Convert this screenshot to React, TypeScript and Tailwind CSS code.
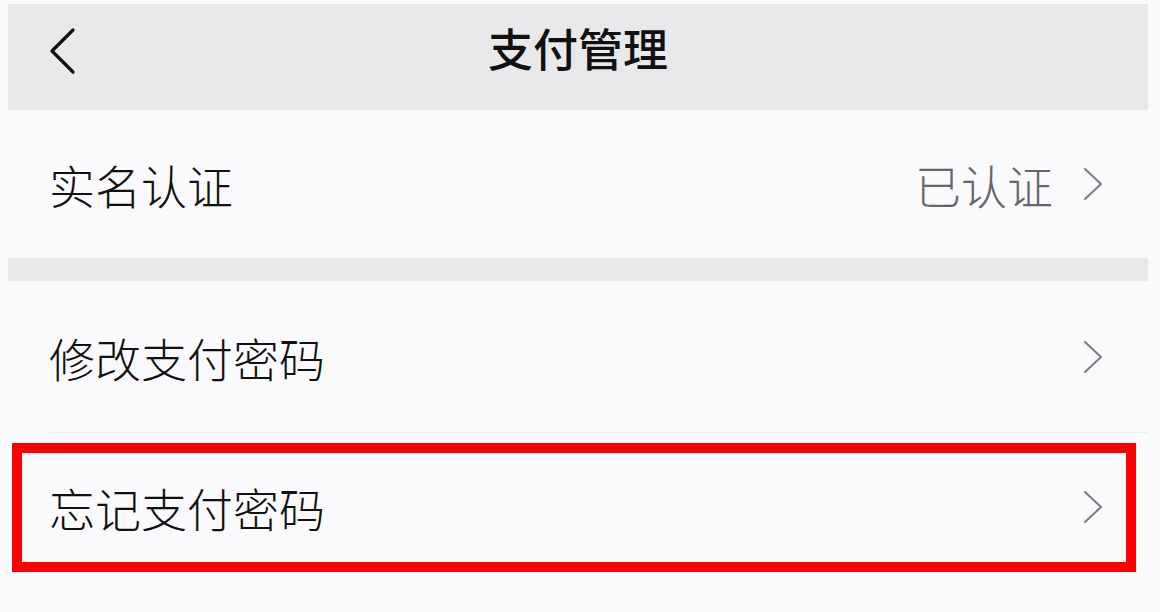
const font = { fontFamily: '"Noto Sans CJK SC", "Noto Sans", sans-serif' };

function ChevronRight() {
  return (
    <svg width="20" height="34" viewBox="0 0 20 34" fill="none" className="shrink-0">
      <polyline points="2,2 18,17 2,32" stroke="#7b7b80" strokeWidth="2" strokeLinecap="round" strokeLinejoin="round" />
    </svg>
  );
}

function BackIcon() {
  return (
    <svg width="28" height="48" viewBox="0 0 28 48" fill="none">
      <polyline points="25,3 4,24 25,45" stroke="#111" strokeWidth="3.2" strokeLinecap="round" strokeLinejoin="round" />
    </svg>
  );
}

export default function App() {
  return (
    <div className="min-h-screen bg-[#fafafc] pt-1 pl-2 pr-3 text-[#111]" style={font}>
      {/* header */}
      <div className="h-[106px] bg-[#e9e9eb] grid grid-cols-[1fr_auto_1fr] items-center pb-5">
        <div className="pl-[40px] pt-2">
          <BackIcon />
        </div>
        <h1 className="text-[45px] font-medium leading-none">支付管理</h1>
        <div />
      </div>

      <div className="h-[148px] flex items-center justify-between pl-[41px] pr-[45px]">
        <span className="text-[46px] font-light leading-none">实名认证</span>
        <div className="flex items-center gap-[30px]">
          <span className="text-[46px] font-light leading-none text-[#666669]">已认证</span>
          <ChevronRight />
        </div>
      </div>

      <div className="h-[23px] bg-[#e9e9eb]" />

      <div className="h-[151px] flex items-center justify-between pl-[41px] pr-[45px]">
        <span className="text-[46px] font-light leading-none">修改支付密码</span>
        <ChevronRight />
      </div>

      <div className="h-px bg-[#ededef] ml-[42px]" />

      <div className="relative h-[148px] flex items-center justify-between pl-[41px] pr-[45px]">
        <span className="text-[46px] font-light leading-none">忘记支付密码</span>
        <ChevronRight />
        {/* annotation */}
        <div className="absolute left-[4px] top-[10px] w-[1124px] h-[129px] border-[10px] border-[#ff0000] pointer-events-none" />
      </div>
    </div>
  );
}
